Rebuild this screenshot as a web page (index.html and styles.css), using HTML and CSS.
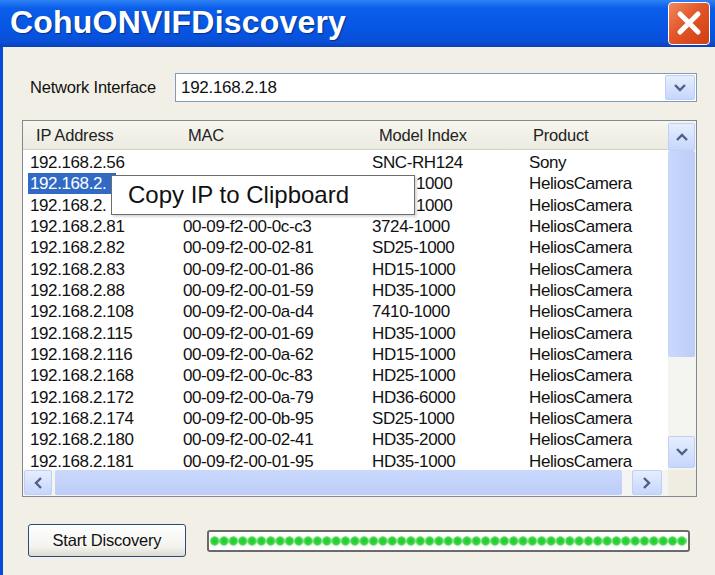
FILE: index.html
```html
<!DOCTYPE html>
<html lang="en">
<head>
    <meta charset="UTF-8">
    <title>CohuONVIFDiscovery</title>
    <link rel="stylesheet" href="styles.css">
</head>
<body>
    <div class="window">
        <div class="titlebar">
            <span class="title">CohuONVIFDiscovery</span>
            <div class="close">
                <svg width="28" height="28" viewBox="0 0 28 28"><path d="M5 5 L23 23 M23 5 L5 23" stroke="#fff" stroke-width="5" stroke-linecap="round"/></svg>
            </div>
        </div>

        <div class="body">
            <!-- Network interface -->
            <div class="net-row">
                <span class="net-label">Network Interface</span>
                <div class="combo">
                    <span class="combo-text">192.168.2.18</span>
                    <span class="combo-btn sbtn">
                        <svg width="14" height="10" viewBox="0 0 14 10"><path d="M2 2 L7 7 L12 2" fill="none" stroke="#4d6185" stroke-width="2.4"/></svg>
                    </span>
                </div>
            </div>

            <!-- Device list -->
            <div class="list">
                <div class="table">
                    <div class="row head">
                        <span>IP Address</span><span>MAC</span><span>Model Index</span><span>Product</span>
                    </div>
                    <div class="rows">
                        <div class="row"><span>192.168.2.56</span><span></span><span>SNC-RH124</span><span>Sony</span></div>
                        <!-- rows under the popup menu: only the visible parts -->
                        <div class="row"><span><i class="sel">192.168.2.</i></span><span></span><span class="tail">1000</span><span>HeliosCamera</span></div>
                        <div class="row"><span>192.168.2.</span><span></span><span class="tail">1000</span><span>HeliosCamera</span></div>
                        <div class="row"><span>192.168.2.81</span><span>00-09-f2-00-0c-c3</span><span>3724-1000</span><span>HeliosCamera</span></div>
                        <div class="row"><span>192.168.2.82</span><span>00-09-f2-00-02-81</span><span>SD25-1000</span><span>HeliosCamera</span></div>
                        <div class="row"><span>192.168.2.83</span><span>00-09-f2-00-01-86</span><span>HD15-1000</span><span>HeliosCamera</span></div>
                        <div class="row"><span>192.168.2.88</span><span>00-09-f2-00-01-59</span><span>HD35-1000</span><span>HeliosCamera</span></div>
                        <div class="row"><span>192.168.2.108</span><span>00-09-f2-00-0a-d4</span><span>7410-1000</span><span>HeliosCamera</span></div>
                        <div class="row"><span>192.168.2.115</span><span>00-09-f2-00-01-69</span><span>HD35-1000</span><span>HeliosCamera</span></div>
                        <div class="row"><span>192.168.2.116</span><span>00-09-f2-00-0a-62</span><span>HD15-1000</span><span>HeliosCamera</span></div>
                        <div class="row"><span>192.168.2.168</span><span>00-09-f2-00-0c-83</span><span>HD25-1000</span><span>HeliosCamera</span></div>
                        <div class="row"><span>192.168.2.172</span><span>00-09-f2-00-0a-79</span><span>HD36-6000</span><span>HeliosCamera</span></div>
                        <div class="row"><span>192.168.2.174</span><span>00-09-f2-00-0b-95</span><span>SD25-1000</span><span>HeliosCamera</span></div>
                        <div class="row"><span>192.168.2.180</span><span>00-09-f2-00-02-41</span><span>HD35-2000</span><span>HeliosCamera</span></div>
                        <div class="row"><span>192.168.2.181</span><span>00-09-f2-00-01-95</span><span>HD35-1000</span><span>HeliosCamera</span></div>
                    </div>
                </div>

                <div class="vscroll">
                    <span class="sbtn up">
                        <svg width="14" height="10" viewBox="0 0 14 10"><path d="M2 8 L7 3 L12 8" fill="none" stroke="#4d6185" stroke-width="2.4"/></svg>
                    </span>
                    <span class="vthumb"></span>
                    <span class="track"></span>
                    <span class="sbtn down">
                        <svg width="14" height="10" viewBox="0 0 14 10"><path d="M2 2 L7 7 L12 2" fill="none" stroke="#4d6185" stroke-width="2.4"/></svg>
                    </span>
                </div>

                <div class="hscroll">
                    <span class="sbtn left">
                        <svg width="10" height="14" viewBox="0 0 10 14"><path d="M8 2 L3 7 L8 12" fill="none" stroke="#4d6185" stroke-width="2.4"/></svg>
                    </span>
                    <span class="hthumb"></span>
                    <span class="track"></span>
                    <span class="sbtn right">
                        <svg width="10" height="14" viewBox="0 0 10 14"><path d="M2 2 L7 7 L2 12" fill="none" stroke="#4d6185" stroke-width="2.4"/></svg>
                    </span>
                </div>
                <div class="corner"></div>

                <!-- context menu -->
                <div class="menu">Copy IP to Clipboard</div>
            </div>

            <!-- Bottom bar -->
            <div class="bottom">
                <button class="start">Start Discovery</button>
                <div class="progress"><div class="dots"></div></div>
            </div>
        </div>
    </div>
</body>
</html>
```

FILE: styles.css
```css
html, body {
    margin: 0;
    padding: 0;
}
body {
    font-family: "Liberation Sans", Arial, sans-serif;
    color: #111;
    background: #f1efe5;
}
.window {
    width: 715px;
    height: 575px;
    overflow: hidden;
    display: flex;
    flex-direction: column;
}
.titlebar {
    height: 47px;
    flex: none;
    display: flex;
    align-items: center;
    justify-content: space-between;
    padding: 0 5px 0 10px;
    background: linear-gradient(#2f82f5 0%, #0a5ee9 18%, #0656e4 60%, #0a4fd6 90%, #0a3fb8 100%);
}
.title {
    color: #fff;
    font-weight: bold;
    font-size: 32px;
    letter-spacing: 0.2px;
    text-shadow: 1px 1px 1px #0a2f86;
    margin-top: -2px;
}
.close {
    width: 40px;
    height: 41px;
    border: 1px solid #fff;
    border-radius: 4px;
    background: linear-gradient(135deg, #f08a5c 0%, #e2562a 45%, #cf3f12 100%);
    display: flex;
    align-items: center;
    justify-content: center;
    margin-top: -1px;
}
.body {
    flex: 1;
    border-left: 3px solid #0a4ad8;
    padding: 26px 18px 0 19px;
    background: #f2f0e6;
}
.net-row {
    display: flex;
    align-items: center;
    height: 29px;
}
.net-label {
    font-size: 16.5px;
    margin-left: 8px;
    width: 145px;
    letter-spacing: -0.2px;
}
.combo {
    flex: 1;
    height: 27px;
    border: 1px solid #7f9db9;
    background: #fff;
    display: flex;
    align-items: center;
    justify-content: space-between;
    padding-right: 1px;
}
.combo-text {
    font-size: 17px;
    letter-spacing: -0.3px;
    padding-left: 5px;
}
.sbtn {
    display: flex;
    align-items: center;
    justify-content: center;
    box-sizing: border-box;
    border: 1px solid #bfd0f6;
    border-radius: 2px;
    background: linear-gradient(#e6eefe, #c6d6fc);
}
.combo-btn {
    width: 30px;
    height: 25px;
}
.list {
    position: relative;
    margin-top: 18px;
    height: 375px;
    border: 1px solid #828790;
    background: #fff;
    display: grid;
    grid-template-columns: 1fr 28px;
    grid-template-rows: 349px 26px;
}
.table {
    overflow: hidden;
}
.row {
    display: grid;
    grid-template-columns: 153px 189px 157px 1fr;
    height: 21.35px;
    line-height: 21.35px;
    font-size: 17px;
    letter-spacing: -0.4px;
    white-space: nowrap;
}
.row span {
    padding-left: 7px;
}
.row span.tail {
    padding-left: 51px;
}
.row.head {
    height: 28px;
    line-height: 28px;
    font-size: 16.5px;
    letter-spacing: -0.2px;
    color: #222;
    background: linear-gradient(#f7f6ef, #ecebe0);
    border-bottom: 1px solid #d6d3c4;
    margin-bottom: 2px;
}
.row.head span:nth-child(1) { padding-left: 13px; }
.row.head span:nth-child(2) { padding-left: 12px; }
.row.head span:nth-child(3) { padding-left: 14px; }
.row.head span:nth-child(4) { padding-left: 11px; }
.sel {
    font-style: normal;
    background: #316ac5;
    color: #fff;
    padding: 1px 10px 1px 2px;
    margin-left: -2px;
}
.vscroll {
    display: flex;
    flex-direction: column;
    padding: 2px 1px 2px 0;
    background: #f4f4f0;
}
.vscroll .up {
    height: 28px;
    flex: none;
}
.vthumb {
    height: 206px;
    flex: none;
    background: linear-gradient(90deg, #cad8fc, #bccdf8);
    border-radius: 2px;
}
.track {
    flex: 1;
}
.vscroll .down {
    height: 32px;
    flex: none;
}
.hscroll {
    display: flex;
    padding: 0 6px 1px 1px;
    background: #f4f4f0;
}
.hscroll .left {
    width: 28px;
    flex: none;
}
.hthumb {
    width: 567px;
    flex: none;
    margin-left: 3px;
    background: linear-gradient(#cad8fc, #bccdf8);
    border-radius: 2px;
}
.hscroll .right {
    width: 30px;
    flex: none;
}
.corner {
    background: #efede2;
}
.menu {
    position: absolute;
    left: 88px;
    top: 54px;
    width: 286px;
    height: 38px;
    line-height: 38px;
    padding-left: 16px;
    font-size: 24px;
    background: #fff;
    border: 1px solid #6e6e6e;
    box-shadow: 2px 2px 2px rgba(0, 0, 0, 0.15);
    white-space: nowrap;
}
.bottom {
    display: flex;
    align-items: center;
    margin-top: 27px;
    padding-left: 6px;
    gap: 21px;
}
.start {
    width: 158px;
    height: 33px;
    font-family: "Liberation Sans", Arial, sans-serif;
    font-size: 16.5px;
    letter-spacing: -0.2px;
    color: #111;
    border: 1px solid #2a4a7e;
    border-radius: 3px;
    background: linear-gradient(#ffffff, #f3f3ee 70%, #dcdbd3);
    padding: 0;
}
.progress {
    width: 477px;
    height: 18px;
    border: 2px solid #6a6a6a;
    border-radius: 3px;
    background: #fff;
    padding: 0 1px;
}
.dots {
    height: 100%;
    background-image: radial-gradient(circle, #1ecb2a 0, #34d43c 3.4px, #9ae89f 4.6px, #ffffff 5.2px);
    background-size: 9.35px 18px;
    background-repeat: repeat-x;
}
```
